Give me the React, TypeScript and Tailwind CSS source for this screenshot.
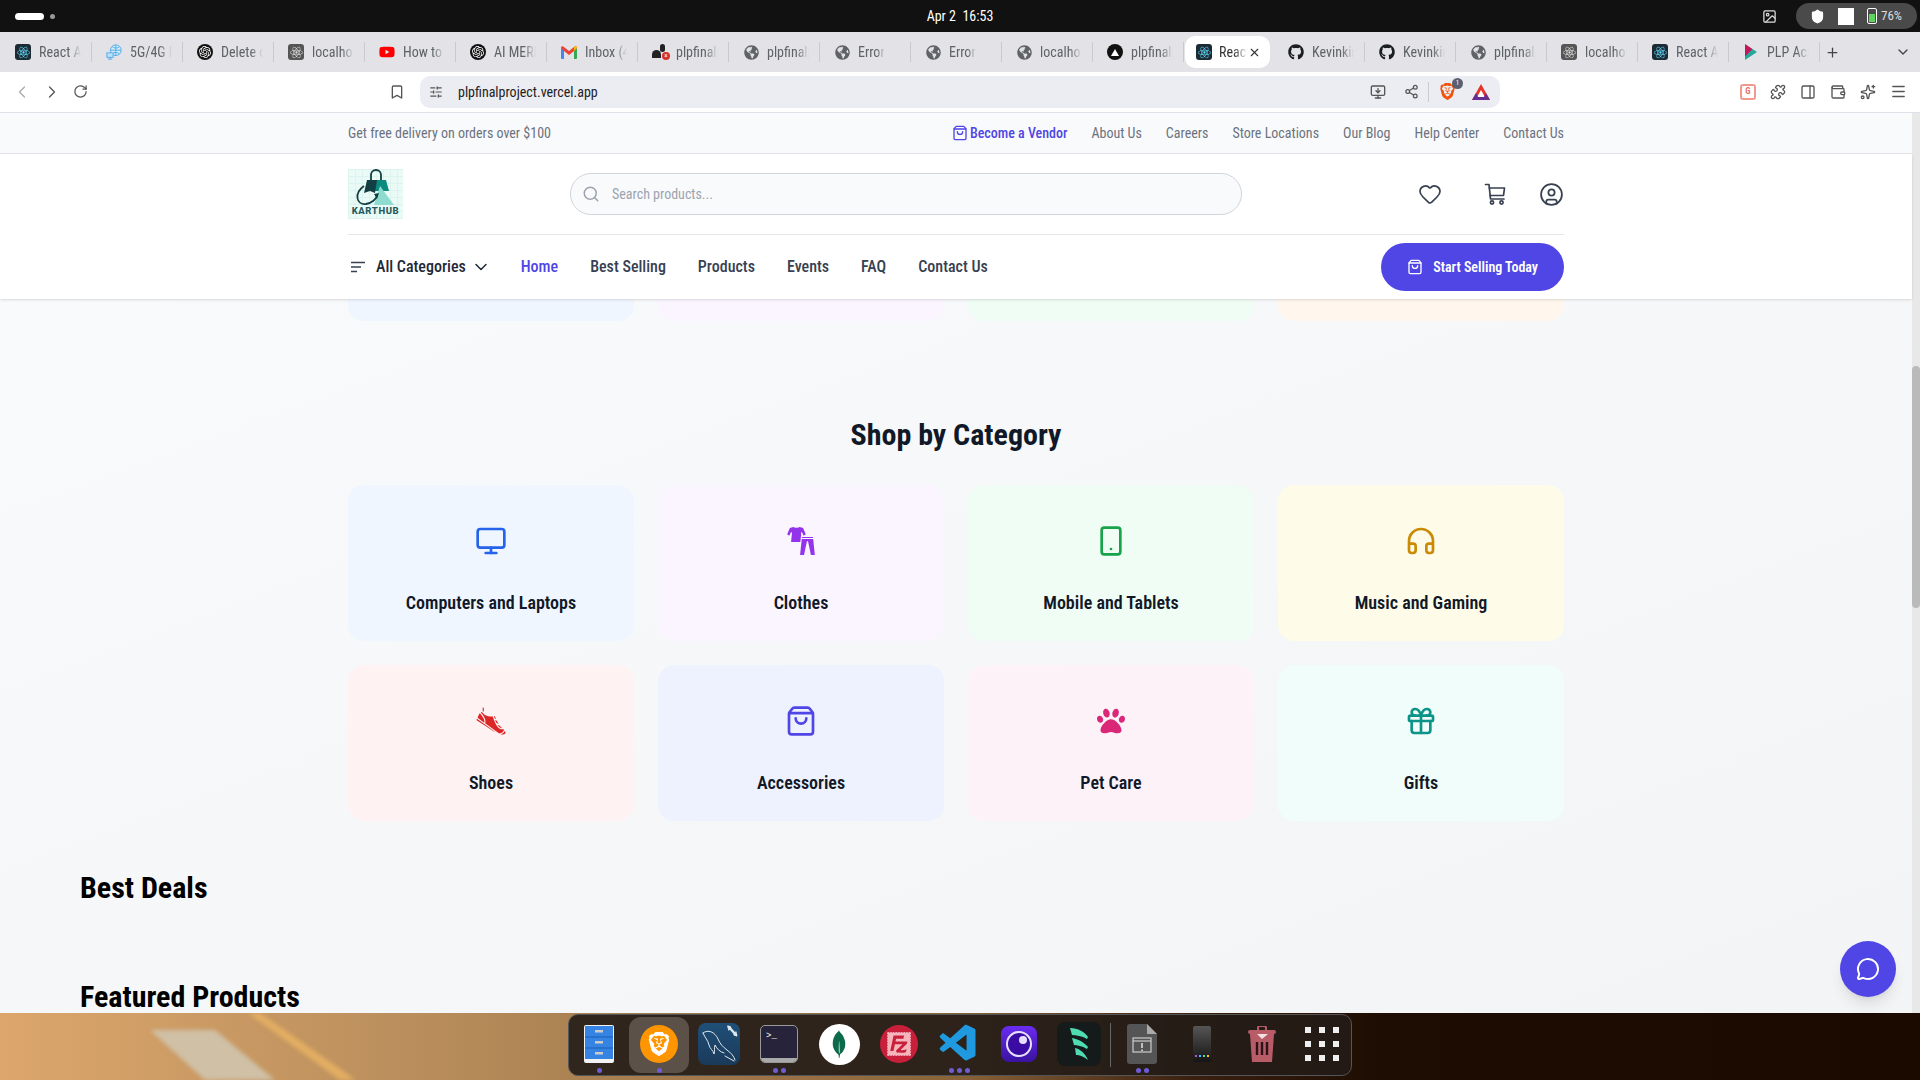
import {
  ChevronDown,
  ChevronLeft,
  ChevronRight,
  CircleUser,
  Bookmark,
  Gift,
  Headphones,
  Heart,
  Menu,
  MessageCircle,
  Monitor,
  PanelRight,
  Plus,
  Puzzle,
  RotateCw,
  Search,
  Share2,
  ShoppingBag,
  Smartphone,
  Sparkles,
  SlidersHorizontal,
  Wallet,
  X,
  MonitorDown,
  ShieldCheck,
  Image,
} from "lucide-react";
import { FaGithub, FaGlobeAmericas, FaPaw, FaReact, FaYoutube } from "react-icons/fa";
import { GiClothes, GiRunningShoe } from "react-icons/gi";
import { SiBrave, SiFilezilla, SiMongodb, SiOpenai } from "react-icons/si";
import { VscVscode } from "react-icons/vsc";

const ReactTab = () => (
  <span className="flex h-4 w-4 items-center justify-center rounded-[3px] bg-[#1c2b33] text-[#61dafb]">
    <FaReact size={13} />
  </span>
);
const LocalTab = () => (
  <span className="flex h-4 w-4 items-center justify-center rounded-[3px] bg-[#555] text-[#ddd]">
    <FaReact size={13} />
  </span>
);
const AiTab = () => (
  <span className="flex h-4 w-4 items-center justify-center rounded-full bg-[#111] text-white">
    <SiOpenai size={12} />
  </span>
);
const Globe = () => <FaGlobeAmericas size={15} className="text-[#5f6368]" />;
const Git = () => <FaGithub size={16} className="text-[#1b1f23]" />;

const RouterTab = () => (
  <svg width="18" height="18" viewBox="0 0 18 18" fill="none" stroke="#4aa8e8" strokeWidth="1">
    <circle cx="11" cy="7" r="6" fill="#d5ecfa" />
    <path d="M5 7 H17 M11 1 V13 M7 3 C9 5 13 5 15 3 M7 11 C9 9 13 9 15 11" />
    <rect x="1" y="10" width="7" height="5" fill="#bfe1f7" />
    <path d="M4.5 15 V17 M2 17 H7" />
  </svg>
);

const GmailTab = () => (
  <svg width="16" height="13" viewBox="0 0 16 13">
    <path d="M0 2 L3 3 V13 H1 a1 1 0 0 1 -1 -1 Z" fill="#4285f4" />
    <path d="M16 2 L13 3 V13 H15 a1 1 0 0 0 1 -1 Z" fill="#34a853" />
    <path d="M0 2 C0 0 2 0 3 1 L8 5 L13 1 C14 0 16 0 16 2 L13 5 L8 9 L3 5 Z" fill="#ea4335" />
    <path d="M13 1 C14 0 16 0 16 2 L13 5 Z" fill="#fbbc04" />
  </svg>
);

const tabs = [
  { icon: <ReactTab />, label: "React App" },
  { icon: <RouterTab />, label: "5G/4G Router" },
  { icon: <AiTab />, label: "Delete chat" },
  { icon: <LocalTab />, label: "localhost:3000" },
  { icon: <FaYoutube size={16} className="text-[#f00]" />, label: "How to deploy" },
  { icon: <AiTab />, label: "AI MERN" },
  { icon: <GmailTab />, label: "Inbox (4)" },
  {
    icon: (
      <span className="relative block h-4 w-4">
        <span className="absolute bottom-[2px] left-0 h-2 w-[9px] rounded-t-full bg-[#222]" />
        <span className="absolute right-[3px] top-0 h-2 w-[5px] rounded-full bg-[#222]" />
        <span className="absolute -right-0.5 bottom-0 flex h-2 w-2 items-center justify-center rounded-full bg-[#d93025] text-[7px] leading-none text-white">
          ×
        </span>
      </span>
    ),
    label: "plpfinalproject",
  },
  { icon: <Globe />, label: "plpfinalproject" },
  { icon: <Globe />, label: "Error" },
  { icon: <Globe />, label: "Error" },
  { icon: <Globe />, label: "localhost" },
  {
    icon: (
      <span className="flex h-4 w-4 items-center justify-center rounded-full bg-[#111]">
        <span className="h-0 w-0 border-x-[4px] border-b-[7px] border-x-transparent border-b-white" />
      </span>
    ),
    label: "plpfinalproject",
  },
  { icon: <ReactTab />, label: "React App", active: true },
  { icon: <Git />, label: "Kevinkimutai" },
  { icon: <Git />, label: "Kevinkimutai" },
  { icon: <Globe />, label: "plpfinalproject" },
  { icon: <LocalTab />, label: "localhost" },
  { icon: <ReactTab />, label: "React App" },
  {
    icon: <span className="block h-4 w-3 bg-[linear-gradient(135deg,#c2185b_45%,#26a69a_45%)] [clip-path:polygon(0_0,100%_50%,0_100%)]" />,
    label: "PLP Academy",
  },
];

const navLinks = ["Best Selling", "Products", "Events", "FAQ", "Contact Us"];
const infoLinks = ["About Us", "Careers", "Store Locations", "Our Blog", "Help Center", "Contact Us"];

const categories = [
  { name: "Computers and Laptops", bg: "bg-[#eff6ff]", icon: <Monitor size={32} className="text-[#2563eb]" /> },
  { name: "Clothes", bg: "bg-[#faf5ff]", icon: <GiClothes size={32} className="text-[#9333ea]" /> },
  { name: "Mobile and Tablets", bg: "bg-[#f0fdf4]", icon: <Smartphone size={32} className="text-[#16a34a]" /> },
  { name: "Music and Gaming", bg: "bg-[#fefce8]", icon: <Headphones size={32} className="text-[#ca8a04]" /> },
  { name: "Shoes", bg: "bg-[#fef2f2]", icon: <GiRunningShoe size={32} className="text-[#dc2626]" /> },
  { name: "Accessories", bg: "bg-[#eef2ff]", icon: <ShoppingBag size={32} className="text-[#4f46e5]" /> },
  { name: "Pet Care", bg: "bg-[#fdf2f8]", icon: <FaPaw size={28} className="text-[#db2777]" /> },
  { name: "Gifts", bg: "bg-[#f0fdfa]", icon: <Gift size={32} className="text-[#0d9488]" /> },
];

const TopBar = () => (
  <div className="flex h-8 shrink-0 items-center bg-[#111111] text-white">
    <div className="flex flex-1 items-center">
      <div className="ml-[15px] h-[7px] w-[29px] rounded-full bg-white" />
      <div className="ml-[6px] h-[5px] w-[5px] rounded-full bg-[#999]" />
    </div>
    <div className="text-[14px]">Apr 2&nbsp;&nbsp;16:53</div>
    <div className="flex flex-1 items-center justify-end">
      <Image size={15} className="mr-[19px] text-[#ddd]" />
      <div className="mr-[3px] flex h-[26px] w-[121px] items-center rounded-full bg-[#4a4a4a] pl-[14px]">
        <ShieldCheck size={15} fill="white" className="text-white" />
        <div className="ml-[13px] h-[17px] w-[16px] bg-white" />
        <div className="ml-[13px] flex h-[16px] w-[10px] items-end rounded-[2px] border border-white p-px">
          <div className="h-[8px] w-full bg-[#5fd35f]" />
        </div>
        <span className="ml-[4px] text-[13px] text-[#ddd]">76%</span>
      </div>
    </div>
  </div>
);

const TabStrip = () => (
  <div className="flex h-10 shrink-0 items-center bg-[#e2e2e7] pl-px">
    {tabs.map((t, i) =>
      t.active ? (
        <div key={i} className="ml-px mr-[4px] flex h-8 w-[85px] shrink-0 items-center rounded-[10px] bg-white pl-[11px] pr-[9px]">
          <span className="flex w-4 shrink-0 items-center justify-center">{t.icon}</span>
          <span className="ml-[7px] flex-1 overflow-hidden whitespace-nowrap text-[14px] text-[#333] [mask-image:linear-gradient(to_right,black_50%,transparent)]">
            {t.label}
          </span>
          <X size={13} className="shrink-0 text-[#333]" />
        </div>
      ) : (
        <div key={i} className="flex h-5 w-[91px] shrink-0 items-center border-r border-[#c9c9cf] pl-[14px] pr-[10px]">
          <span className="flex w-4 shrink-0 items-center justify-center">{t.icon}</span>
          <span className="ml-[8px] overflow-hidden whitespace-nowrap text-[14px] text-[#5f6368] [mask-image:linear-gradient(to_right,black_70%,transparent)]">
            {t.label}
          </span>
        </div>
      )
    )}
    <Plus size={15} className="ml-[5px] text-[#444]" />
    <ChevronDown size={16} className="ml-[55px] text-[#444]" />
  </div>
);

const BatIcon = () => (
  <svg width="18" height="16" viewBox="0 0 18 16">
    <path d="M9 0 L18 16 H0 Z" fill="#e5352b" />
    <path d="M9 6 L13.5 14 H4.5 Z" fill="#fff" />
    <path d="M0 16 L4 9 L6 13 H12 L14 9 L18 16 Z" fill="#662d91" />
  </svg>
);

const Toolbar = () => (
  <div className="flex h-[41px] shrink-0 items-center border-b border-[#e0e0e8] bg-white pb-px text-[#555]">
    <ChevronLeft size={20} className="ml-[12px] text-[#aaa]" strokeWidth={1.5} />
    <ChevronRight size={20} className="ml-[10px]" strokeWidth={1.5} />
    <RotateCw size={15} className="ml-[11px]" />
    <Bookmark size={16} className="ml-[301px]" />
    <div className="ml-[15px] flex h-8 w-[1080px] items-center rounded-[10px] bg-[#ecedf2] pl-[9px] pr-[10px]">
      <SlidersHorizontal size={14} />
      <span className="ml-[15px] flex-1 pt-px text-[14px] text-[#222]">plpfinalproject.vercel.app</span>
      <MonitorDown size={16} />
      <Share2 size={15} className="ml-[18px]" />
      <div className="ml-[9px] h-5 w-px bg-[#ccc]" />
      <span className="relative ml-[10px]">
        <SiBrave size={17} className="text-[#f1540e]" />
        <span className="absolute -right-[7px] -top-[5px] flex h-[11px] w-[11px] items-center justify-center rounded-full bg-[#5a6070] text-[7px] text-white">
          1
        </span>
      </span>
      <span className="ml-[16px]">
        <BatIcon />
      </span>
    </div>
    <span className="ml-[240px] flex h-4 w-4 items-center justify-center rounded-[3px] border-2 border-[#f19a8c] text-[9px] font-bold text-[#e5726a]">
      G
    </span>
    <Puzzle size={16} className="ml-[14px]" />
    <PanelRight size={16} className="ml-[14px]" />
    <Wallet size={16} className="ml-[14px]" />
    <Sparkles size={16} className="ml-[14px]" />
    <Menu size={17} className="ml-[14px]" />
  </div>
);

const Logo = () => (
  <div className="flex h-[50px] w-[55px] flex-col items-center bg-[#eafaf6] bg-[linear-gradient(#dcf3ee_1px,transparent_1px),linear-gradient(90deg,#dcf3ee_1px,transparent_1px)] bg-[length:7px_7px]">
    <svg width="48" height="38" viewBox="0 0 48 38">
      <path d="M19 11 V6 a5 5 0 0 1 10 0 V11" fill="none" stroke="#123f44" strokeWidth="1.8" />
      <path d="M15 11 H34 L37 22 H22 Z" fill="#0c8a80" />
      <path d="M15 11 H25 L23 24 L18 22 L12 24 Z" fill="#123f44" />
      <path d="M28 17 L42 36 H22 Z" fill="#8edccf" />
      <path d="M12 17 C2 24 4 36 14 35 C20 34 24 30 25 27" fill="none" stroke="#123f44" strokeWidth="1.8" />
      <path d="M27 24 L22 25 L25 30 Z" fill="#123f44" />
    </svg>
    <span className="mt-[-1px] whitespace-nowrap text-[9.5px] font-extrabold leading-[10px] tracking-[0.6px] text-[#1f5a5c] [font-stretch:100%]">
      KARTHUB
    </span>
  </div>
);

const CartIcon = () => (
  <svg width="24" height="24" viewBox="0 0 24 24" fill="none" stroke="#374151" strokeWidth="1.7" strokeLinecap="round" strokeLinejoin="round">
    <path d="M2.5 2.5 H6 L7.5 17 H21" />
    <path d="M6.3 6 H21.5 L20.5 13.5 H7.2" />
    <circle cx="9" cy="20.5" r="1.6" />
    <circle cx="18.5" cy="20.5" r="1.6" />
  </svg>
);

const SiteHeader = () => (
  <div className="relative z-10 shrink-0">
    <div className="border-b border-[#e5e7eb] bg-[#f9fafb]">
      <div className="mx-auto flex h-10 max-w-7xl items-center justify-between px-8 text-sm text-[#6b7280]">
        <span>Get free delivery on orders over $100</span>
        <div className="flex items-center gap-6">
          <span className="flex items-center gap-[2px] font-medium text-[#4f46e5]">
            <ShoppingBag size={16} />
            Become a Vendor
          </span>
          {infoLinks.map((l) => (
            <span key={l}>{l}</span>
          ))}
        </div>
      </div>
    </div>
    <div className="bg-white shadow-sm">
      <div className="mx-auto max-w-7xl px-8">
        <div className="flex h-[81px] items-center border-b border-[#e5e7eb]">
          <Logo />
          <div className="ml-[167px] flex h-[42px] w-[672px] items-center rounded-full border border-[#d1d5db] bg-[#f9fafb] pl-[11px]">
            <Search size={18} className="text-[#9ca3af]" />
            <span className="ml-[12px] text-sm text-[#9ca3af]">Search products...</span>
          </div>
          <div className="ml-auto flex items-center">
            <Heart size={24} className="text-[#374151]" strokeWidth={1.7} />
            <span className="ml-[41px]">
              <CartIcon />
            </span>
            <CircleUser size={25} className="ml-[32px] text-[#374151]" strokeWidth={1.7} />
          </div>
        </div>
        <div className="flex h-16 items-center">
          <div className="flex items-center text-[#1f2937]">
            <svg width="16" height="16" viewBox="0 0 16 16" className="ml-[2px]" fill="none" stroke="#374151" strokeWidth="1.6">
              <path d="M1 3.5 H15 M1 8 H11 M1 12.5 H7" />
            </svg>
            <span className="ml-[10px] font-medium">All Categories</span>
            <ChevronDown size={20} className="ml-[5px]" strokeWidth={1.8} />
          </div>
          <div className="ml-[30px] flex items-center gap-8 font-medium text-[#374151]">
            <span className="text-[#4f46e5]">Home</span>
            {navLinks.map((l) => (
              <span key={l}>{l}</span>
            ))}
          </div>
          <button className="ml-auto flex h-12 items-center gap-[10px] rounded-full bg-[#4f46e5] px-[26px] text-sm font-semibold text-white">
            <ShoppingBag size={16} />
            Start Selling Today
          </button>
        </div>
      </div>
    </div>
  </div>
);

const Content = () => (
  <div className="min-w-0 flex-1 overflow-hidden bg-gradient-to-br from-[#f9fafb] to-[#f3f4f6]">
    <div className="mx-auto max-w-7xl px-8">
      <div className="grid h-[22px] grid-cols-4 gap-6">
        <div className="rounded-b-2xl bg-[#eff6ff]" />
        <div className="rounded-b-2xl bg-[#faf5ff]" />
        <div className="rounded-b-2xl bg-[#f0fdf4]" />
        <div className="rounded-b-2xl bg-[#fff7ed]" />
      </div>
      <h2 className="mb-8 mt-24 text-center text-3xl font-bold text-[#111827]">Shop by Category</h2>
      <div className="grid grid-cols-4 gap-6">
        {categories.map((c) => (
          <div key={c.name} className={`${c.bg} flex h-[156px] flex-col items-center rounded-2xl pt-10`}>
            <div className="flex h-8 items-center justify-center">{c.icon}</div>
            <div className="mt-[32px] text-lg font-semibold text-[#111827]">{c.name}</div>
          </div>
        ))}
      </div>
    </div>
    <h2 className="mt-[49px] pl-20 text-3xl font-bold text-black">Best Deals</h2>
    <h2 className="mt-[73px] pl-20 text-3xl font-bold text-black">Featured Products</h2>
  </div>
);

const Scrollbar = () => (
  <div className="w-2 shrink-0 bg-[#e8e8e8] pt-[253px]">
    <div className="h-[242px] rounded-full bg-[#bababa]" />
  </div>
);

const files = (
  <svg width="32" height="40" viewBox="0 0 32 40">
    <rect x="1" y="1" width="30" height="38" rx="2" fill="#f2f2f2" />
    <rect x="2" y="2" width="28" height="33" fill="#3584e4" />
    <path d="M2 13 H30 M2 24 H30" stroke="#1c5fb0" strokeWidth="1" />
    <rect x="12" y="6" width="8" height="2.5" fill="#ccc" />
    <rect x="12" y="17" width="8" height="2.5" fill="#ccc" />
    <rect x="12" y="28" width="8" height="2.5" fill="#ccc" />
  </svg>
);

const mysql = (
  <span className="flex h-[42px] w-[42px] items-center justify-center rounded-lg bg-gradient-to-b from-[#1f4f78] to-[#1b3a5a]">
    <svg width="42" height="42" viewBox="0 0 42 42" fill="none" stroke="#dfe8ef" strokeWidth="1" strokeLinecap="round">
      <path d="M5 10 C10 6 17 9 20 16 C22 21 25 24 29 27 C33 30 36 33 37 37" />
      <path d="M5 10 C7 15 10 17 11 22 C12 26 15 27 16 31 C17 28 16 25 17 22 C19 26 22 29 26 30" />
      <path d="M27 33 L36 38" />
      <path d="M31 4 L38 12" stroke="#dfe8ef" strokeWidth="2.4" />
      <path d="M30 3 L33 4 L31 7 Z M36 12 L39 13 L38 9 Z" fill="#dfe8ef" />
    </svg>
  </span>
);

const dockItems = [
  { icon: files, dots: 1 },
  {
    icon: (
      <span className="flex h-[38px] w-[38px] items-center justify-center rounded-full bg-[#ff9500]">
        <SiBrave size={24} className="text-white" />
      </span>
    ),
    dots: 1,
    active: true,
  },
  { icon: mysql, dots: 0 },
  {
    icon: (
      <span className="block h-[36px] w-[36px] rounded-sm border-b-[4px] border-[#aaa] bg-[#26233a] pl-[5px] pt-[5px] font-['Liberation_Mono',monospace] text-[9px] leading-[10px] text-white outline outline-1 outline-[#999]">
        &gt;_
      </span>
    ),
    dots: 2,
  },
  {
    icon: (
      <span className="flex h-[41px] w-[41px] items-center justify-center rounded-full bg-white">
        <SiMongodb size={28} className="text-[#0b6b4a]" />
      </span>
    ),
    dots: 0,
  },
  {
    icon: (
      <span className="flex h-[38px] w-[38px] items-center justify-center rounded-full bg-[#c8203b]">
        <SiFilezilla size={24} className="text-[#f6b5bd]" />
      </span>
    ),
    dots: 0,
  },
  { icon: <VscVscode size={44} className="text-[#1f9ae0]" />, dots: 3 },
  {
    icon: (
      <span className="flex h-[36px] w-[36px] items-center justify-center rounded-lg bg-gradient-to-b from-[#6a2cf0] to-[#3a12a0]">
        <span className="flex h-[26px] w-[26px] items-start justify-end rounded-full border-2 border-[#e6e0ff] bg-[#3a0ca3] p-[3px]">
          <span className="h-2 w-2 rounded-full bg-[#e6e0ff]" />
        </span>
      </span>
    ),
    dots: 0,
  },
  {
    icon: (
      <span className="flex h-[44px] w-[44px] items-center justify-center rounded-lg bg-[#151a1a]">
        <svg width="22" height="34" viewBox="0 0 22 34" fill="#4fdcb0">
          <path d="M2 1 C10 1 17 5 20 10 L19 12 C14 9 8 8 4 8 Z" />
          <path d="M4 11 C10 12 16 15 20 20 L19 22 C14 19 9 18 6 18 Z" />
          <path d="M7 21 C12 22 17 26 20 33 C15 29 11 28 8 28 Z" />
        </svg>
      </span>
    ),
    dots: 0,
  },
  { divider: true },
  {
    icon: (
      <svg width="30" height="40" viewBox="0 0 30 40">
        <path d="M3 0 H20 L30 10 V37 a3 3 0 0 1 -3 3 H3 a3 3 0 0 1 -3 -3 V3 a3 3 0 0 1 3 -3 Z" fill="#555" />
        <path d="M20 0 L30 10 H20 Z" fill="#aaa" />
        <rect x="6" y="14" width="18" height="14" fill="none" stroke="#ccc" strokeWidth="1.2" />
        <path d="M6 17 H24" stroke="#ccc" strokeWidth="1.2" />
        <path d="M15 19 V24 M15 25.5 V27" stroke="#ddd" strokeWidth="1.6" />
      </svg>
    ),
    dots: 2,
  },
  {
    icon: (
      <svg width="18" height="36" viewBox="0 0 18 36">
        <rect width="18" height="36" rx="2" fill="url(#ph)" />
        <defs>
          <linearGradient id="ph" x1="0" y1="0" x2="0" y2="1">
            <stop offset="0" stopColor="#555" />
            <stop offset="1" stopColor="#151515" />
          </linearGradient>
        </defs>
        <rect x="2" y="29" width="2" height="2" fill="#a855f7" />
        <rect x="6" y="29" width="2" height="2" fill="#38bdf8" />
        <rect x="10" y="29" width="2" height="2" fill="#4ade80" />
        <rect x="14" y="29" width="2" height="2" fill="#fbbf24" />
      </svg>
    ),
    dots: 0,
  },
  {
    icon: (
      <svg width="28" height="36" viewBox="0 0 28 36">
        <path d="M10 4 V2 a2 2 0 0 1 2 -2 h4 a2 2 0 0 1 2 2 V4" fill="none" stroke="#b85c68" strokeWidth="2" />
        <rect y="4" width="28" height="4" rx="2" fill="#b85c68" />
        <path d="M2 8 H26 L24 36 H4 Z" fill="#b85c68" />
        <path d="M9 8 H20 L14 13 Z" fill="#f4dfe1" />
        <path d="M9 16 V29 M14 16 V29 M19 16 V29" stroke="#2a1418" strokeWidth="2.4" />
      </svg>
    ),
    dots: 0,
  },
  {
    icon: (
      <span className="grid grid-cols-3 gap-x-[8px] gap-y-[8px]">
        {Array.from({ length: 9 }).map((_, i) => (
          <span key={i} className="h-[6px] w-[6px] bg-[#eee]" />
        ))}
      </span>
    ),
    dots: 0,
  },
];

const Desktop = () => (
  <div className="relative flex h-[67px] shrink-0 items-start justify-center overflow-hidden bg-[linear-gradient(90deg,#dca66c_0%,#b98e5c_22%,#a47c4e_34%,#8a6238_50%,#3a2010_62%,#1d0d02_72%,#1a0a00_100%)] pt-px">
    <svg className="absolute left-0 top-0 blur-[2px]" width="420" height="67" viewBox="0 0 420 67">
      <path d="M150 17 L215 17 L275 67 L205 67 Z" fill="#cfc0a6" />
      <path d="M248 0 L260 0 L356 67 L340 67 Z" fill="#e3ae62" />
    </svg>
    <div className="relative flex h-[62px] w-[784px] items-center rounded-[10px] border border-[#555] bg-[#241c17]/90">
      {dockItems.map((d, i) =>
        d.divider ? (
          <div key={i} className="mx-px h-[44px] w-px shrink-0 bg-[#666]" />
        ) : (
          <div
            key={i}
            className={`${d.active ? "bg-[#5b5148]" : ""} flex h-[56px] w-[60px] shrink-0 flex-col items-center rounded-xl pt-[4px]`}
          >
            <div className="flex h-[46px] items-center justify-center">{d.icon}</div>
            <div className="mt-px flex h-[5px] gap-[3px]">
              {Array.from({ length: d.dots || 0 }).map((_, j) => (
                <span key={j} className="h-[5px] w-[5px] rounded-full bg-[#6e5cd6]" />
              ))}
            </div>
          </div>
        )
      )}
    </div>
  </div>
);

export default function App() {
  return (
    <div className="flex h-screen w-screen flex-col overflow-hidden font-['Roboto',sans-serif] [font-stretch:87.5%]">
      <TopBar />
      <TabStrip />
      <Toolbar />
      <div className="relative flex min-h-0 flex-1">
        <div className="flex min-w-0 flex-1 flex-col">
          <SiteHeader />
          <Content />
        </div>
        <Scrollbar />
        <button className="absolute bottom-4 right-6 z-20 flex h-14 w-14 items-center justify-center rounded-full bg-[#4f46e5] text-white shadow-lg">
          <MessageCircle size={24} />
        </button>
      </div>
      <Desktop />
    </div>
  );
}
